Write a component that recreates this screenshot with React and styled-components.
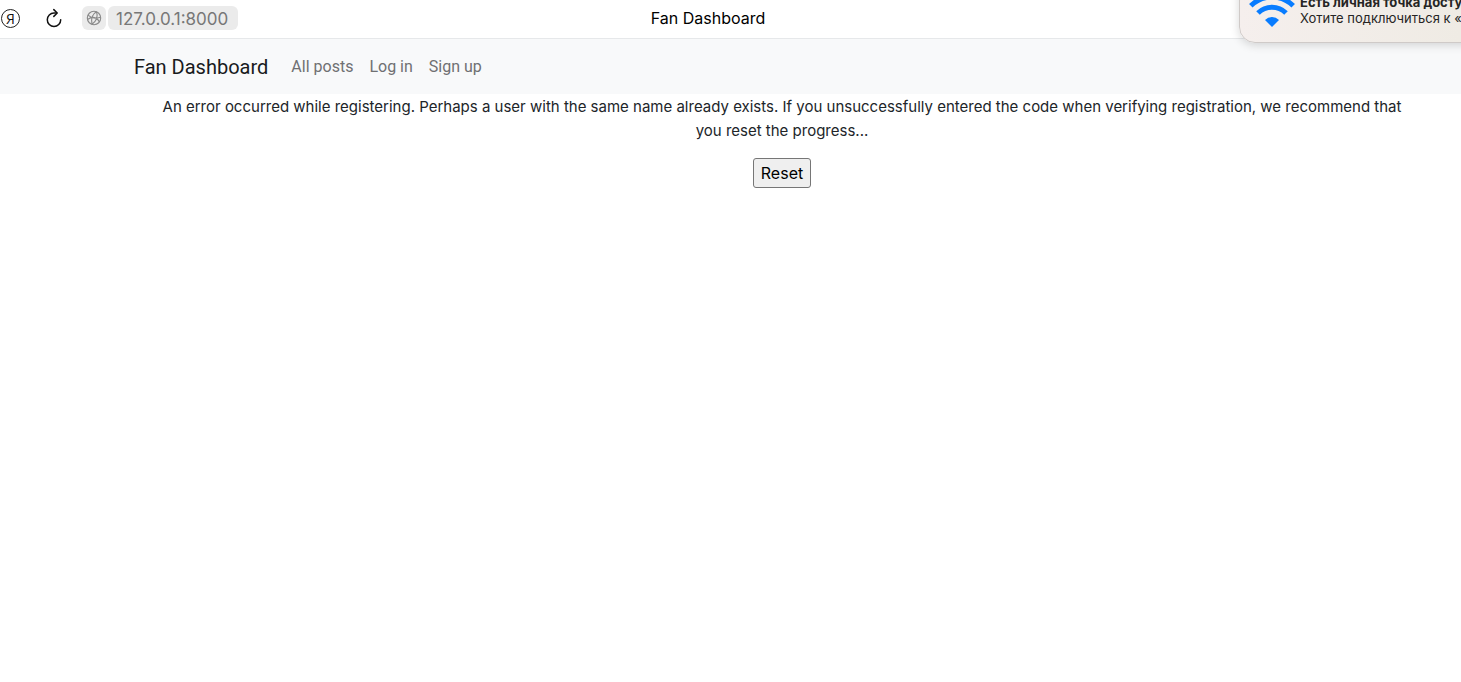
import React from "react";
import styled, { createGlobalStyle } from "styled-components";

const GlobalStyle = createGlobalStyle`
  *, *::before, *::after { box-sizing: border-box; }
  body {
    margin: 0;
    background: #fff;
    color: #212529;
    font-family: Inter, "Liberation Sans", sans-serif;
    font-size: 16px;
    line-height: 24px;
  }
`;

const Page = styled.div`
  position: relative;
  min-height: 100vh;
  overflow: hidden;
`;

const Toolbar = styled.header`
  display: grid;
  grid-template-columns: 1fr auto 1fr;
  align-items: center;
  height: 39px;
  padding: 0 45px 2px 0;
  border-bottom: 1px solid #e6e8ea;
`;

const Tools = styled.div`
  display: flex;
  align-items: center;
`;

const IconButton = styled.button`
  display: flex;
  align-items: center;
  justify-content: center;
  width: 24px;
  height: 24px;
  margin: 0 ${(p) => p.$gap || 0}px 0 0;
  padding: 0;
  border: 0;
  border-radius: 6px;
  background: ${(p) => (p.$filled ? "#ebebeb" : "transparent")};
  color: ${(p) => (p.$filled ? "#8a8a8a" : "#111")};
`;

const HomeButton = styled.button`
  width: 19px;
  height: 19px;
  margin: 0 22px 0 1px;
  padding: 0;
  border: 1px solid #222;
  border-radius: 50%;
  background: transparent;
  color: #111;
  font: 14px/17px "Open Sans", sans-serif;
  text-align: center;
`;

const Address = styled.button`
  height: 24px;
  padding: 1px 10px 0 8px;
  border: 0;
  border-radius: 6px;
  background: #ebebeb;
  color: #777;
  font: 17px/24px Inter, sans-serif;
`;

const PageTitle = styled.div`
  color: #000;
`;

const Navbar = styled.nav`
  display: flex;
  align-items: center;
  height: 55px;
  padding: 0 31px 0 134px;
  background: #f8f9fa;
  font-family: Roboto, sans-serif;
`;

const Brand = styled.a`
  margin-right: 23px;
  color: #191b1d;
  font-size: 20px;
  line-height: 30px;
  text-decoration: none;
`;

const NavLinks = styled.div`
  display: flex;
  gap: 16px;
`;

const NavLink = styled.a`
  color: #6f7072;
  text-decoration: none;
`;

const Content = styled.main`
  display: flex;
  flex-direction: column;
  align-items: center;
  gap: 15px;
  padding: 1px 31px 0 134px;
  text-align: center;
`;

const Message = styled.p`
  margin: 0;
  padding: 0 16px;
  font-size: 15px;
`;

const ResetButton = styled.button`
  height: 30px;
  padding: 0 7px;
  border: 1px solid #767676;
  border-radius: 3px;
  background: #efefef;
  color: #000;
  font: 16px/24px Inter, sans-serif;
`;

const Notification = styled.aside`
  position: absolute;
  top: -30px;
  right: -120px;
  display: flex;
  align-items: flex-end;
  gap: 5px;
  width: 342px;
  height: 73px;
  padding: 0 0 15px 9px;
  border: 1px solid #cfcac8;
  border-radius: 16px;
  background: linear-gradient(90deg, #f5efed, #efebe4 65%, #f2e9e4);
  box-shadow: 0 2px 10px rgba(0, 0, 0, 0.16);
  color: #262524;
  font: 13px/16px Inter, sans-serif;
  white-space: nowrap;
`;

const NotificationText = styled.div`
  padding-bottom: 1px;
`;

const NotificationTitle = styled.strong`
  display: block;
  font-weight: 700;
`;

const ReloadIcon = () => (
  <svg width="18" height="20" viewBox="0 0 18 20" fill="none" stroke="currentColor" strokeWidth="1.5" strokeLinecap="round" strokeLinejoin="round" aria-hidden="true">
    <path d="M11.5 5H9a6.7 6.7 0 1 0 6.7 6.7" />
    <path d="M8.8 1.6 12.2 5 8.8 8.4" />
  </svg>
);

const GlobeIcon = () => (
  <svg width="16" height="16" viewBox="0 0 16 16" fill="none" stroke="currentColor" strokeWidth="1.1" aria-hidden="true">
    <circle cx="8" cy="8" r="6.7" />
    <path d="M10.5 1.8C6.5 4 4.8 8.5 6 14.3M10.5 1.8C12 6 10.5 11 6 14.3M2 5.2C5 8 9.5 9 14.4 7.2M1.5 9.5C5 7 10 5.5 13.4 12" />
  </svg>
);

const WifiIcon = () => (
  <svg width="46" height="38" viewBox="0 0 46 38" fill="none" stroke="#087cff" strokeWidth="5" aria-hidden="true">
    <path d="M1.8 16.8a30 30 0 0 1 42.4 0" />
    <path d="M9 24a19.8 19.8 0 0 1 28 0" />
    <path d="M23 38l-7-7a9.9 9.9 0 0 1 14 0z" fill="#087cff" stroke="none" />
  </svg>
);

const links = ["All posts", "Log in", "Sign up"];

export default function App() {
  return (
    <Page>
      <GlobalStyle />
      <Toolbar>
        <Tools>
          <HomeButton type="button">Я</HomeButton>
          <IconButton type="button" aria-label="Reload" $gap={16}>
            <ReloadIcon />
          </IconButton>
          <IconButton type="button" aria-label="Site information" $filled $gap={2}>
            <GlobeIcon />
          </IconButton>
          <Address type="button">127.0.0.1:8000</Address>
        </Tools>
        <PageTitle>Fan Dashboard</PageTitle>
      </Toolbar>
      <Navbar>
        <Brand href="#">Fan Dashboard</Brand>
        <NavLinks>
          {links.map((label) => (
            <NavLink key={label} href="#">{label}</NavLink>
          ))}
        </NavLinks>
      </Navbar>
      <Content>
        <Message>
          An error occurred while registering. Perhaps a user with the same name
          already exists. If you unsuccessfully entered the code when verifying
          registration, we recommend that you reset the progress...
        </Message>
        <ResetButton type="button">Reset</ResetButton>
      </Content>
      <Notification>
        <WifiIcon />
        <NotificationText>
          <NotificationTitle>Есть личная точка доступа</NotificationTitle>
          Хотите подключиться к «
        </NotificationText>
      </Notification>
    </Page>
  );
}
